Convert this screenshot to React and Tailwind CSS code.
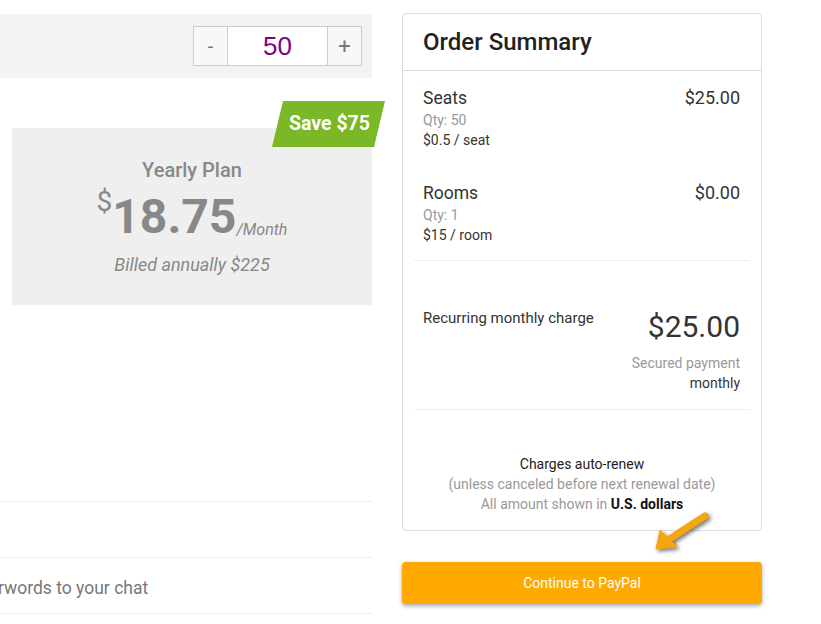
import React from 'react';

const LineItem = ({ name, price, qty, rate }) => (
  <div className="flex justify-between">
    <div>
      <div className="text-[17.5px] leading-[24px] text-[#333]">{name}</div>
      <div className="text-[14px] leading-[20px] text-[#999]">{qty}</div>
      <div className="text-[14px] leading-[20px] text-[#333]">{rate}</div>
    </div>
    <div className="text-[18px] leading-[24px] text-[#333]">{price}</div>
  </div>
);

export default function App() {
  return (
    <div className="w-[821px] h-[624px] bg-white overflow-hidden" style={{ fontFamily: 'Roboto, "Liberation Sans", sans-serif' }}>
      <div className="flex gap-[30px] pt-[13px]">
        {/* Left column */}
        <div className="w-[372px] shrink-0">
          <div className="mt-[1px] h-[64px] bg-[#f3f3f3] flex items-center justify-end pr-[10px]">
            <div className="flex h-[40px] border border-[#ccc]">
              <button className="w-[34px] bg-[#f8f8f8] text-[#777] text-[20px] border-r border-[#ccc]">-</button>
              <div className="w-[99px] bg-white flex items-center justify-center text-[26px] text-[#800080]" style={{ fontFamily: '"Liberation Sans", Arial, sans-serif' }}>50</div>
              <button className="w-[34px] bg-[#f8f8f8] text-[#777] text-[22px] border-l border-[#ccc]">+</button>
            </div>
          </div>

          <div className="pt-[50px] pl-[12px]">
            <div className="relative h-[177px] bg-[#efefef] flex flex-col items-center pt-[28px] text-[#888]">
              <div className="absolute top-[-27px] right-[-13px] h-[46px] w-[113px] bg-[#7ab828] flex items-center justify-center pl-[2px] text-white text-[19.5px] font-bold [clip-path:polygon(11px_0,100%_0,calc(100%-11px)_100%,0_100%)]">
                Save $75
              </div>
              <div className="text-[20px] leading-[28px] font-medium">Yearly Plan</div>
              <div className="flex items-end leading-none mt-[8px]">
                <span className="text-[28px] self-start mt-[-4px]">$</span>
                <span className="text-[48px] font-bold leading-[50px]">18.75</span>
                <span className="text-[16px] italic mb-[4px]">/Month</span>
              </div>
              <div className="text-[18px] italic leading-[24px] mt-[11px]">Billed annually $225</div>
            </div>
          </div>

          <div className="mt-[196px] border-t border-[#eee]">
            <div className="h-[56px] border-b border-[#eee]"></div>
            <div className="h-[56px] border-b border-[#eee] flex items-center pt-[5px] text-[17.5px] text-[#777] ml-[-2px]">
              rwords to your chat
            </div>
          </div>
        </div>

        {/* Right column */}
        <div className="relative w-[360px] shrink-0">
          <div className="border border-[#ddd] rounded-[4px]">
            <div className="h-[57px] border-b border-[#ddd] flex items-center pl-[20px] text-[24px] font-medium text-[#222]">
              Order Summary
            </div>
            <div className="px-[11px]">
              <div className="pl-[9px] pr-[10px] pt-[15px] pb-[15px] border-b border-[#eee]">
                <LineItem name="Seats" price="$25.00" qty="Qty: 50" rate="$0.5 / seat" />
                <div className="h-[31px]"></div>
                <LineItem name="Rooms" price="$0.00" qty="Qty: 1" rate="$15 / room" />
              </div>
              <div className="pl-[9px] pr-[10px] pt-[47px] pb-[16px] border-b border-[#eee] flex justify-between">
                <div className="text-[15px] leading-[20px] text-[#333]">Recurring monthly charge</div>
                <div className="text-right mt-[1px]">
                  <div className="text-[30px] leading-[36px] text-[#333]">$25.00</div>
                  <div className="text-[14px] leading-[20px] text-[#999] mt-[8px]">Secured payment</div>
                  <div className="text-[14px] leading-[20px] text-[#333]">monthly</div>
                </div>
              </div>
              <div className="pt-[44px] pb-[16px] text-center text-[14px] leading-[20px]">
                <div className="text-[#222]">Charges auto-renew</div>
                <div className="text-[#999]">(unless canceled before next renewal date)</div>
                <div className="text-[#999]">All amount shown in <span className="font-bold text-[#111]">U.S. dollars</span></div>
              </div>
            </div>
          </div>

          <button className="mt-[31px] w-full h-[42px] rounded-[4px] bg-[#ffa800] text-white text-[14px] shadow-[0_2px_4px_rgba(0,0,0,0.35)]">
            Continue to PayPal
          </button>

          <svg className="absolute left-[244px] top-[495px] drop-shadow-[2px_2px_2px_rgba(0,0,0,0.55)]" width="80" height="56" viewBox="0 0 80 56">
            <line x1="59" y1="8" x2="22" y2="32" stroke="#f5a50f" strokeWidth="7" strokeLinecap="round" />
            <polygon points="10,41 14,22 31,39" fill="#f5a50f" strokeLinejoin="round" stroke="#f5a50f" strokeWidth="1" />
          </svg>
        </div>
      </div>
    </div>
  );
}
